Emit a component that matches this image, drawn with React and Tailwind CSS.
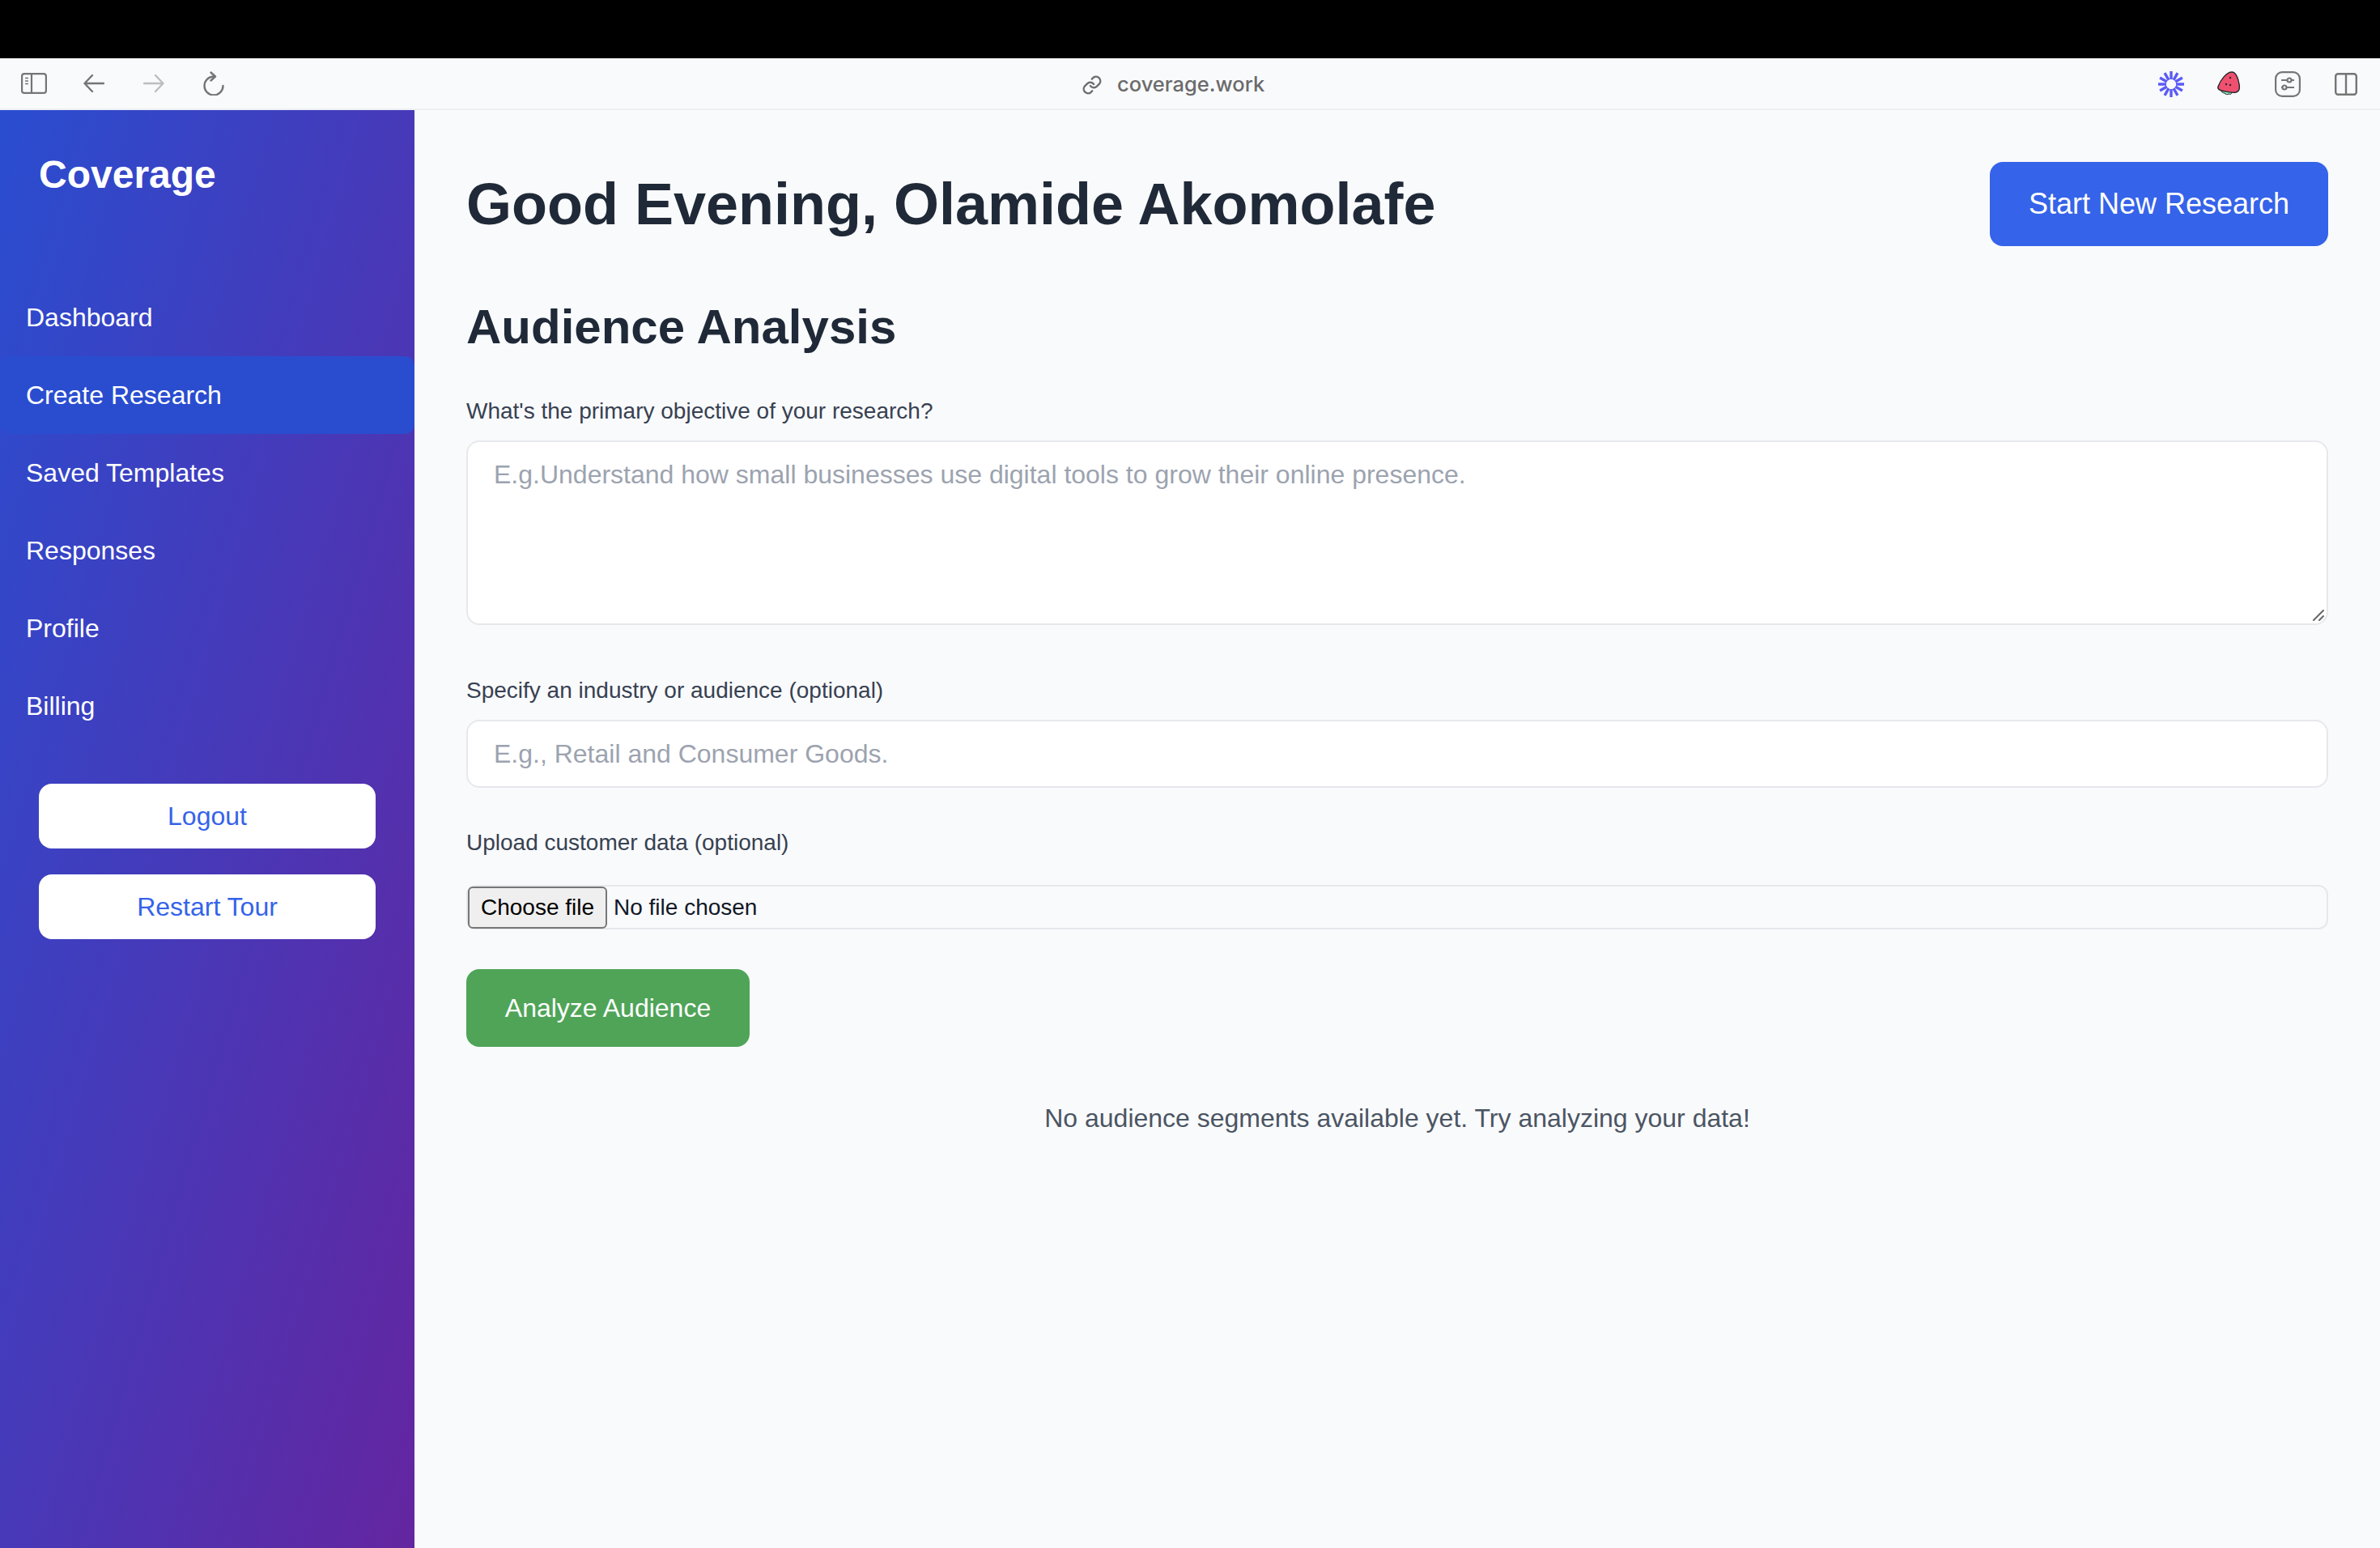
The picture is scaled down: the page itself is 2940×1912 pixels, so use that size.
import React from "react";

const navItems = ["Dashboard", "Create Research", "Saved Templates", "Responses", "Profile", "Billing"];

const BrowserBar = () => (
  <div className="flex h-[64px] items-center border-b-2 border-[#eeeff2] bg-[#f9fafc]">
    <div className="flex w-[1336px] items-center pl-[26px]">
      <svg className="h-[26px] w-[32px]" viewBox="0 0 32 26" fill="none" stroke="#757575" strokeWidth="2.2">
        <rect x="1.1" y="1.1" width="29.8" height="23.8" rx="3" />
        <path d="M13 1v24" />
        <path d="M5 6.5h4M5 10h4M5 13.5h4" strokeWidth="1.6" />
      </svg>
      <svg className="ml-[45px] h-[24px] w-[26px]" viewBox="0 0 26 24" fill="none" stroke="#757575" strokeWidth="2.4" strokeLinecap="round" strokeLinejoin="round">
        <path d="M25 12H2M11 2 1.5 12 11 22" />
      </svg>
      <svg className="ml-[48px] h-[24px] w-[26px]" viewBox="0 0 26 24" fill="none" stroke="#bdbdbd" strokeWidth="2.4" strokeLinecap="round" strokeLinejoin="round">
        <path d="M1 12h23M15 2l9.5 10L15 22" />
      </svg>
      <svg className="ml-[48px] h-[30px] w-[26px]" viewBox="0 0 26 30" fill="none" stroke="#757575" strokeWidth="2.4" strokeLinecap="round" strokeLinejoin="round">
        <path d="M13 6.5A11.5 11.5 0 1 0 24.5 18" />
        <path d="M9.5 1.5 15 6.5l-5.5 5" />
      </svg>
    </div>
    <div className="flex items-center pt-[3px]">
      <svg className="h-[26px] w-[26px]" viewBox="0 0 24 24" fill="none" stroke="#6e6e6e" strokeWidth="2.2" strokeLinecap="round" strokeLinejoin="round">
        <path d="M10 13a5 5 0 0 0 7.5.5l3-3a5 5 0 0 0-7-7l-1.7 1.7" />
        <path d="M14 11a5 5 0 0 0-7.5-.5l-3 3a5 5 0 0 0 7 7l1.7-1.7" />
      </svg>
      <span className="ml-[18px] font-['Inter',sans-serif] text-[25.5px] font-medium text-[#6b6b6b]">coverage.work</span>
    </div>
    <div className="ml-auto flex items-center pr-[28px] pt-[2px]">
      <svg className="h-[32px] w-[32px]" viewBox="0 0 32 32" fill="none" stroke="#5b5bf6" strokeWidth="3.4">
        <path d="M16 0v10M16 22v10M0 16h10M22 16h10M8 2.1l5 8.7M19 21.2l5 8.7M24 2.1l-5 8.7M13 21.2l-5 8.7M2.1 8l8.7 5M21.2 19l8.7 5M29.9 8l-8.7 5M10.8 19l-8.7 5" />
      </svg>
      <svg className="ml-[41px] h-[32px] w-[28px]" viewBox="0 0 28 32" fill="none">
        <path d="M5 23c0 3 2 4 4 4 1 2 4 2 5 1 2 1 4 0 4-2 2-1 2-2 1-2z" fill="#8fe0bd" stroke="#1f2a2a" strokeWidth="1" />
        <path d="M18 1C12 1 4 10 1 19c-1 3 1 4 4 5 6 1 13 3 18 2 4-1 5-5 4-10C26 9 23 1 18 1z" fill="#f0506f" stroke="#1f2a2a" strokeWidth="1.4" />
        <circle cx="16" cy="8" r="1.2" fill="#1f2a2a" />
        <circle cx="11" cy="16" r="1.2" fill="#1f2a2a" />
        <circle cx="16" cy="17" r="1.2" fill="#1f2a2a" />
      </svg>
      <svg className="ml-[43px] h-[32px] w-[32px]" viewBox="0 0 32 32" fill="none" stroke="#757575" strokeWidth="2.2">
        <rect x="1.1" y="1.1" width="29.8" height="29.8" rx="8" />
        <path d="M8 11h7.5M20.5 11H24M8 20h1.5M14.5 20H24" />
        <circle cx="18" cy="11" r="2.5" />
        <circle cx="12" cy="20" r="2.5" />
      </svg>
      <svg className="ml-[42px] h-[28px] w-[28px]" viewBox="0 0 28 28" fill="none" stroke="#757575" strokeWidth="2.4">
        <rect x="1.2" y="1.2" width="25.6" height="25.6" rx="3" />
        <path d="M14 1v26" />
      </svg>
    </div>
  </div>
);

const Sidebar = () => (
  <aside className="flex w-[512px] shrink-0 flex-col bg-linear-to-br/srgb from-[#2a4dd0] to-[#6425a0]">
    <div className="mt-[50px] h-[158px] pl-[48px] text-[48px] font-bold leading-[60px] text-white">Coverage</div>
    <nav className="flex flex-col">
      {navItems.map((item) => (
        <div key={item} className={`flex h-[96px] items-center rounded-[12px] pl-[32px] text-[32px] text-white ${item === "Create Research" ? "bg-[#2a4dd0]" : ""}`}>
          {item}
        </div>
      ))}
    </nav>
    <div className="mt-[48px] flex flex-col gap-[32px] px-[48px]">
      <button className="h-[80px] rounded-[16px] bg-white text-[32px] text-[#3563e9]">Logout</button>
      <button className="h-[80px] rounded-[16px] bg-white text-[32px] text-[#3563e9]">Restart Tour</button>
    </div>
  </aside>
);

const App = () => (
  <div className="flex min-h-screen flex-col bg-black font-['Liberation_Sans',Arial,sans-serif]">
    <div className="h-[72px] bg-black" />
    <BrowserBar />
    <div className="flex h-[1776px]">
      <Sidebar />
      <main className="flex-1 bg-[#f9fafc] pl-[64px] pr-[64px] pt-[64px] text-[#1f2937]">
        <div className="flex h-[104px] items-center justify-between">
          <h1 className="text-[72px] font-bold">Good Evening, Olamide Akomolafe</h1>
          <button className="h-[104px] w-[418px] rounded-[16px] bg-[#3563e9] text-[36px] text-white">Start New Research</button>
        </div>
        <h2 className="mt-[65px] text-[60px] font-bold leading-[70px]">Audience Analysis</h2>
        <label className="mt-[51px] block text-[28px] leading-[36px] text-[#374151]">What's the primary objective of your research?</label>
        <div className="relative mt-[18px] h-[228px] rounded-[16px] border-2 border-[#e7e8ec] bg-white px-[32px] pt-[20px] text-[32px] leading-[40px] text-[#9ca3af]">
          E.g.Understand how small businesses use digital tools to grow their online presence.
          <svg className="absolute bottom-[2px] right-[2px] h-[16px] w-[16px]" viewBox="0 0 16 16" stroke="#666" strokeWidth="2" strokeLinecap="round">
            <path d="M2 14 14 2M9 14l5-5" />
          </svg>
        </div>
        <label className="mt-[63px] block text-[28px] leading-[36px] text-[#374151]">Specify an industry or audience (optional)</label>
        <div className="mt-[18px] flex h-[84px] items-center rounded-[16px] border-2 border-[#e7e8ec] bg-white px-[32px] text-[32px] text-[#9ca3af]">
          E.g., Retail and Consumer Goods.
        </div>
        <label className="mt-[50px] block text-[28px] leading-[36px] text-[#374151]">Upload customer data (optional)</label>
        <div className="mt-[34px] flex h-[55px] items-center rounded-[12px] border-2 border-[#e7e8ec] text-[28px] text-[#111827]">
          <button className="h-[52px] w-[172px] rounded-[6px] border-2 border-[#767676] bg-[#efefef] text-black">Choose file</button>
          <span className="ml-[8px]">No file chosen</span>
        </div>
        <button className="mt-[49px] h-[96px] w-[350px] rounded-[16px] bg-[#4fa458] text-[32px] text-white">Analyze Audience</button>
        <p className="mt-[68px] text-center text-[32px] leading-[40px] text-[#4b5563]">No audience segments available yet. Try analyzing your data!</p>
      </main>
    </div>
  </div>
);

export default App;
